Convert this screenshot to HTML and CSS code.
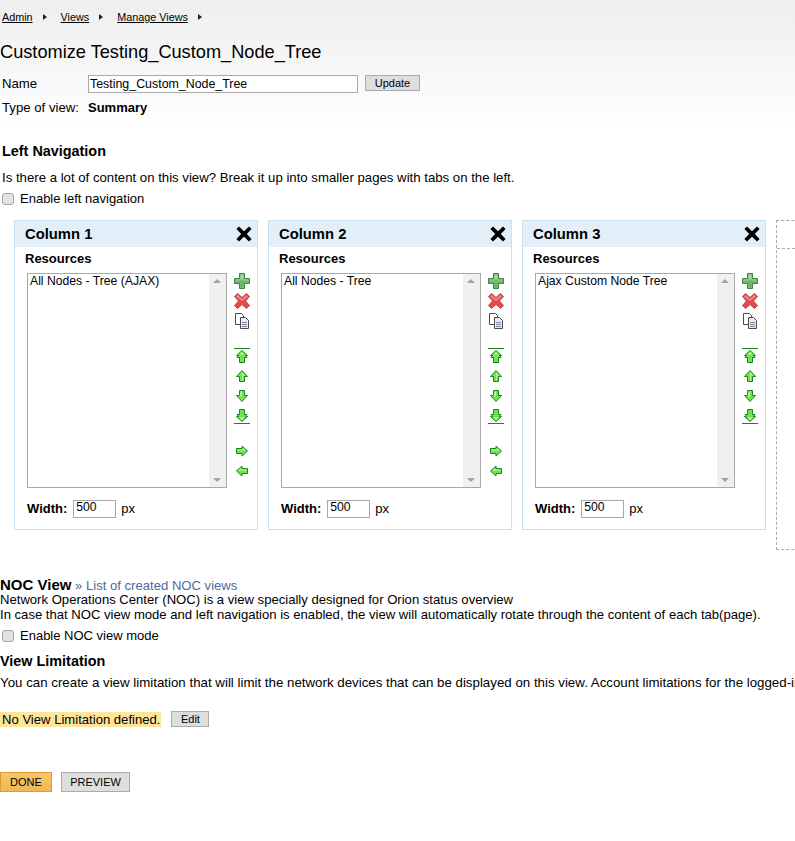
FILE: index.html
```html
<!DOCTYPE html>
<html lang="en">
<head>
<meta charset="utf-8">
<title>Customize Testing_Custom_Node_Tree</title>
<link rel="stylesheet" href="styles.css">
</head>
<body>
<svg class="defs" width="0" height="0" aria-hidden="true">
  <symbol id="i-close" viewBox="0 0 18 18"><path d="M4 1.5 9 6.2 14 1.5 16.6 4 11.8 9 16.6 14 14 16.6 9 11.8 4 16.6 1.4 14 6.2 9 1.4 4Z" fill="#000"/></symbol>
  <symbol id="i-add" viewBox="0 0 18 18"><path d="M6.5 1.5h5v5h5v5h-5v5h-5v-5h-5v-5h5Z" fill="#6fb56f" stroke="#3f8443"/><path d="M7.5 2.5h3v5h5v1h-5v-1h-3v-5ZM2.5 7.5h5v1h-5Z" fill="#a5d8a5"/></symbol>
  <symbol id="i-del" viewBox="0 0 18 18"><path d="M4.5 1.5 9 5.5 13.5 1.5 16.5 4.5 12.5 9 16.5 13.5 13.5 16.5 9 12.5 4.5 16.5 1.5 13.5 5.5 9 1.5 4.5Z" fill="#e8484a" stroke="#b04a4c"/><path d="M4.5 3 9 7 13.5 3 15 4.5 9 9 3 4.5Z" fill="#f28a8a"/></symbol>
  <symbol id="i-copy" viewBox="0 0 18 18"><path d="M2.5 1.5h6l2 2v9h-8Z" fill="#fff" stroke="#4a4a4a"/><path d="M7.5 5.5h5l3 3v8h-8Z" fill="#e6ecf5" stroke="#4a4a4a"/><path d="M9 10.5h5M9 12.5h5M9 14.5h5" stroke="#7b8798"/></symbol>
  <symbol id="i-up" viewBox="-1 -1 18 18"><path d="M8 2.5 13.5 8.5H10.5V13.5H5.5V8.5H2.5Z" fill="#72e24e" stroke="#158a1c"/><path d="M8 4 11 7.5H9V12.5H8Z" fill="#b7f59c"/></symbol>
  <symbol id="i-down" viewBox="-1 -1 18 18"><path d="M8 13.5 13.5 7.5H10.5V2.5H5.5V7.5H2.5Z" fill="#72e24e" stroke="#158a1c"/><path d="M6.5 3.5H8V8.5H5.5Z" fill="#b7f59c"/></symbol>
  <symbol id="i-right" viewBox="-1 -1 18 18"><path d="M13.5 8 8 3V5.5H2.5V10.5H8V13Z" fill="#72e24e" stroke="#158a1c"/><path d="M3.5 6.5H9V5L11.5 7.5H3.5Z" fill="#b7f59c"/></symbol>
  <symbol id="i-left" viewBox="-1 -1 18 18"><path d="M2.5 8 8 3V5.5H13.5V10.5H8V13Z" fill="#72e24e" stroke="#158a1c"/><path d="M4.5 7.5 7 5V6.5H12.5V7.5Z" fill="#b7f59c"/></symbol>
  <symbol id="i-top" viewBox="-1 -1 18 18"><path d="M0 .5H16" stroke="#158a1c"/><path d="M8 2.5 13.5 7.5H11.5L13 9.5H10.5V14.5H5.5V9.5H3L4.5 7.5H2.5Z" fill="#72e24e" stroke="#158a1c"/><path d="M8 4 10.5 6.5H5.5Z" fill="#c9f7b4"/></symbol>
  <symbol id="i-bottom" viewBox="-1 -1 18 18"><path d="M0 15.5H16" stroke="#158a1c"/><path d="M8 13.5 13.5 8.5H11.5L13 6.5H10.5V1.5H5.5V6.5H3L4.5 8.5H2.5Z" fill="#72e24e" stroke="#158a1c"/><path d="M8 12 10.5 9.5H5.5Z" fill="#c9f7b4"/></symbol>
</svg>

<nav class="crumbs">
  <a href="#">Admin</a><span class="crumb-arrow"></span>
  <a href="#">Views</a><span class="crumb-arrow"></span>
  <a href="#">Manage Views</a><span class="crumb-arrow"></span>
</nav>

<h1 class="title">Customize Testing_Custom_Node_Tree</h1>

<div class="field-row name-row">
  <label class="field-label">Name</label>
  <input class="name-input" type="text" value="Testing_Custom_Node_Tree">
  <button class="btn btn-update">Update</button>
</div>
<div class="field-row type-row">
  <span class="field-label">Type of view:</span>
  <strong class="type-value">Summary</strong>
</div>

<h2 class="section-head left-nav-head">Left Navigation</h2>
<p class="line nav-desc">Is there a lot of content on this view? Break it up into smaller pages with tabs on the left.</p>
<label class="check-row"><input type="checkbox"><span>Enable left navigation</span></label>

<div class="columns">
  <section class="card">
    <header class="card-head"><span>Column 1</span><svg class="card-close"><use href="#i-close"/></svg></header>
    <div class="card-body">
      <div class="res-label">Resources</div>
      <div class="res-row">
        <div class="listbox"><div class="list-items">All Nodes - Tree (AJAX)</div><div class="scrollbar"><i class="sb-up"></i><i class="sb-down"></i></div></div>
        <div class="tools">
          <svg class="tool"><use href="#i-add"/></svg><svg class="tool"><use href="#i-del"/></svg><svg class="tool"><use href="#i-copy"/></svg>
          <svg class="tool tool-gap"><use href="#i-top"/></svg><svg class="tool"><use href="#i-up"/></svg><svg class="tool"><use href="#i-down"/></svg><svg class="tool"><use href="#i-bottom"/></svg>
          <svg class="tool tool-gap"><use href="#i-right"/></svg><svg class="tool"><use href="#i-left"/></svg>
        </div>
      </div>
      <div class="width-row"><strong>Width:</strong><input class="width-input" type="text" value="500"><span>px</span></div>
    </div>
  </section>
  <section class="card">
    <header class="card-head"><span>Column 2</span><svg class="card-close"><use href="#i-close"/></svg></header>
    <div class="card-body">
      <div class="res-label">Resources</div>
      <div class="res-row">
        <div class="listbox"><div class="list-items">All Nodes - Tree</div><div class="scrollbar"><i class="sb-up"></i><i class="sb-down"></i></div></div>
        <div class="tools">
          <svg class="tool"><use href="#i-add"/></svg><svg class="tool"><use href="#i-del"/></svg><svg class="tool"><use href="#i-copy"/></svg>
          <svg class="tool tool-gap"><use href="#i-top"/></svg><svg class="tool"><use href="#i-up"/></svg><svg class="tool"><use href="#i-down"/></svg><svg class="tool"><use href="#i-bottom"/></svg>
          <svg class="tool tool-gap"><use href="#i-right"/></svg><svg class="tool"><use href="#i-left"/></svg>
        </div>
      </div>
      <div class="width-row"><strong>Width:</strong><input class="width-input" type="text" value="500"><span>px</span></div>
    </div>
  </section>
  <section class="card">
    <header class="card-head"><span>Column 3</span><svg class="card-close"><use href="#i-close"/></svg></header>
    <div class="card-body">
      <div class="res-label">Resources</div>
      <div class="res-row">
        <div class="listbox"><div class="list-items">Ajax Custom Node Tree</div><div class="scrollbar"><i class="sb-up"></i><i class="sb-down"></i></div></div>
        <div class="tools">
          <svg class="tool"><use href="#i-add"/></svg><svg class="tool"><use href="#i-del"/></svg><svg class="tool"><use href="#i-copy"/></svg>
          <svg class="tool tool-gap"><use href="#i-top"/></svg><svg class="tool"><use href="#i-up"/></svg><svg class="tool"><use href="#i-down"/></svg>
          <svg class="tool"><use href="#i-bottom"/></svg>
        </div>
      </div>
      <div class="width-row"><strong>Width:</strong><input class="width-input" type="text" value="500"><span>px</span></div>
    </div>
  </section>
  <div class="drop-zone"><div class="drop-head"></div></div>
</div>

<div class="noc-head"><strong>NOC View</strong> <a href="#"><span class="noc-raquo">»</span> List of created NOC views</a></div>
<p class="line">Network Operations Center (NOC) is a view specially designed for Orion status overview</p>
<p class="line">In case that NOC view mode and left navigation is enabled, the view will automatically rotate through the content of each tab(page).</p>
<label class="check-row noc-check"><input type="checkbox"><span>Enable NOC view mode</span></label>

<h2 class="section-head limit-head">View Limitation</h2>
<p class="line limit-desc">You can create a view limitation that will limit the network devices that can be displayed on this view. Account limitations for the logged-in user will still apply.</p>

<div class="limit-row"><span class="limit-flag">No View Limitation defined.</span><button class="btn btn-edit">Edit</button></div>

<div class="actions"><button class="btn-action btn-done">DONE</button><button class="btn-action btn-preview">PREVIEW</button></div>
</body>
</html>
```
FILE: styles.css
```css
* { box-sizing: border-box; }
html, body { height: 100%; }
body {
  margin: 0;
  overflow: hidden;
  font-family: "Liberation Sans", Arial, sans-serif;
  font-size: 13px;
  color: #000;
  background: linear-gradient(#eeeeee 0, #ffffff 130px) no-repeat #fff;
  white-space: nowrap;
}
.defs { position: absolute; }

.crumbs { display: flex; align-items: center; height: 11px; margin-top: 11px; padding-left: 2px; font-size: 10.8px; }
.crumbs a { color: #000; text-decoration: underline; }
.crumb-arrow { width: 0; height: 0; margin: 1px 14px 0 10px; border-left: 4px solid #222; border-top: 3px solid transparent; border-bottom: 3px solid transparent; }
.title { margin: 19px 0 0; font-size: 18.2px; font-weight: normal; line-height: 22px; height: 22px; }

.field-row { display: flex; align-items: center; padding-left: 2px; }
.name-row { margin-top: 11px; height: 19px; }
.type-row { margin-top: 7px; height: 15px; }
.field-label { width: 86px; font-size: 13.2px; }
.name-input { width: 270px; height: 18px; padding: 1px 1px; margin: 0; border: 1px solid #a9a9a9; background: #fff; font: 12.4px "Liberation Sans", Arial, sans-serif; color: #000; border-radius: 0; }
.btn { display: block; padding: 0; border: 1px solid #ababab; background: #dedede; color: #000; font: 11px "Liberation Sans", Arial, sans-serif; border-radius: 0; }
.btn-update { width: 55px; height: 16px; margin: 0 0 2px 7px; }
.type-value { font-size: 13px; }

.section-head { margin: 0; padding-left: 2px; font-size: 14.4px; font-weight: bold; line-height: 16px; }
.left-nav-head { margin-top: 28px; }
.line { margin: 0; font-size: 13.1px; line-height: 15px; }
.nav-desc { margin-top: 11px; padding-left: 2px; font-size: 13.2px; }
.check-row { display: flex; align-items: center; height: 15px; margin-top: 6px; font-size: 13px; }
.check-row input { appearance: none; width: 12px; height: 12px; margin: 0 6px 0 2px; border: 1px solid #a6a6a6; border-radius: 3px; background: #e2e2e2; }

.columns { display: flex; align-items: flex-start; gap: 10px; margin-top: 14px; padding-left: 14px; }
.card { flex: none; width: 244px; height: 310px; border: 1px solid #c8e1f2; background: #fff; }
.card-head { display: flex; justify-content: space-between; align-items: center; height: 26px; padding: 0 4px 0 10px; background: #e2eff8; font-size: 14.8px; font-weight: bold; }
.card-close { width: 18px; height: 18px; }
.card-body { padding: 0 0 0 10px; }
.res-label { margin-top: 4px; height: 20px; font-size: 13px; font-weight: bold; line-height: 16px; }
.res-row { display: flex; height: 215px; margin: 2px 0 0 2px; }
.listbox { display: flex; width: 200px; height: 215px; border: 1px solid #a9a9a9; background: #fff; }
.list-items { flex: 1; padding: 0 2px; font-size: 12.2px; line-height: 14px; }
.scrollbar { position: relative; width: 17px; background: #f0f0f0; }
.sb-up, .sb-down { position: absolute; left: 4px; width: 0; height: 0; border-left: 4px solid transparent; border-right: 4px solid transparent; }
.sb-up { top: 5px; border-bottom: 4px solid #a3a3a3; }
.sb-down { bottom: 5px; border-top: 4px solid #a3a3a3; }
.tools { display: flex; flex-direction: column; margin: -1px 0 0 6px; }
.tool { display: block; flex: none; width: 18px; height: 18px; margin-bottom: 2px; }
.tool-gap { margin-top: 15px; }
.width-row { display: flex; align-items: center; height: 19px; margin: 11px 0 0 2px; font-size: 13px; }
.width-input { width: 43px; height: 18px; padding: 0 2px 3px; margin: 0 5px 0 6px; border: 1px solid #a9a9a9; font: 12.2px "Liberation Sans", Arial, sans-serif; border-radius: 0; }
.drop-zone { flex: none; width: 100px; height: 330px; border: 1px dashed #ababab; }
.drop-head { height: 28px; border-bottom: 1px dashed #ababab; }

.noc-head { margin-top: 27px; height: 15px; font-size: 13.1px; line-height: 15px; }
.noc-head strong { font-size: 15px; }
.noc-head a { color: #4d6a9e; text-decoration: none; }
.noc-check { margin-top: 6px; }
.limit-head { margin-top: 10px; padding-left: 0; }
.limit-desc { margin-top: 6px; font-size: 13.3px; }
.limit-row { display: flex; align-items: center; height: 16px; margin-top: 21px; }
.limit-flag { background: #ffe599; padding: 0 1px 0 2px; line-height: 15px; font-size: 13.1px; }
.btn-edit { width: 38px; height: 16px; margin-left: 10px; }
.actions { display: flex; gap: 9px; margin-top: 45px; }
.btn-action { height: 20px; padding: 0; font: 11px "Liberation Sans", Arial, sans-serif; color: #000; border-radius: 0; }
.btn-done { width: 52px; border: 1px solid #e39b2a; background: linear-gradient(#f6c670, #efb654); }
.btn-preview { width: 69px; border: 1px solid #ababab; background: #dedede; }
```
